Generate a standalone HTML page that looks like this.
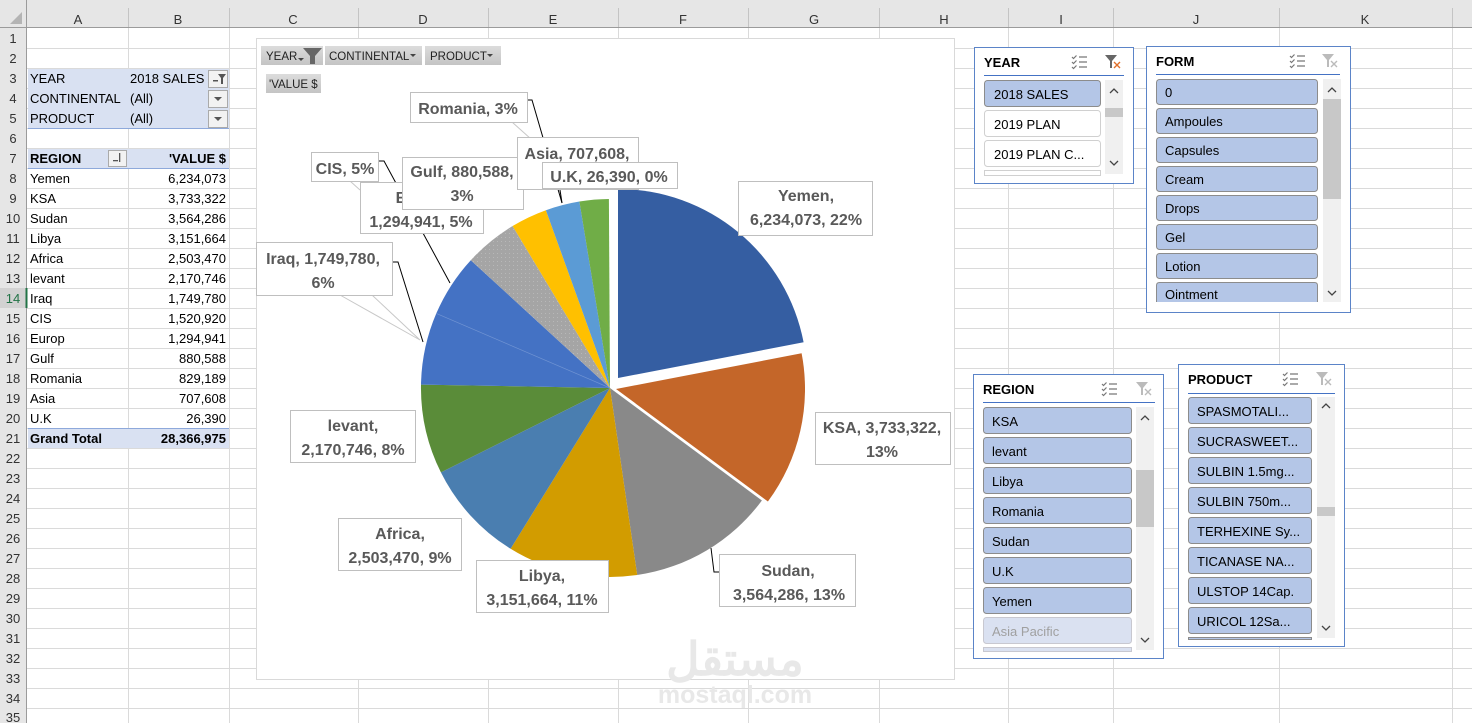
<!DOCTYPE html>
<html><head><meta charset="utf-8"><style>
html,body{margin:0;padding:0;background:#fff;overflow:hidden}
svg{display:block}
text{font-family:"Liberation Sans",sans-serif}
</style></head><body>
<svg width="1472" height="723" viewBox="0 0 1472 723" xmlns="http://www.w3.org/2000/svg">
<!-- grid -->
<g stroke="#dadada" stroke-width="1">
<line x1="27" y1="48.5" x2="1472" y2="48.5"/><line x1="27" y1="68.5" x2="1472" y2="68.5"/><line x1="27" y1="88.5" x2="1472" y2="88.5"/><line x1="27" y1="108.5" x2="1472" y2="108.5"/><line x1="27" y1="128.5" x2="1472" y2="128.5"/><line x1="27" y1="148.5" x2="1472" y2="148.5"/><line x1="27" y1="168.5" x2="1472" y2="168.5"/><line x1="27" y1="188.5" x2="1472" y2="188.5"/><line x1="27" y1="208.5" x2="1472" y2="208.5"/><line x1="27" y1="228.5" x2="1472" y2="228.5"/><line x1="27" y1="248.5" x2="1472" y2="248.5"/><line x1="27" y1="268.5" x2="1472" y2="268.5"/><line x1="27" y1="288.5" x2="1472" y2="288.5"/><line x1="27" y1="308.5" x2="1472" y2="308.5"/><line x1="27" y1="328.5" x2="1472" y2="328.5"/><line x1="27" y1="348.5" x2="1472" y2="348.5"/><line x1="27" y1="368.5" x2="1472" y2="368.5"/><line x1="27" y1="388.5" x2="1472" y2="388.5"/><line x1="27" y1="408.5" x2="1472" y2="408.5"/><line x1="27" y1="428.5" x2="1472" y2="428.5"/><line x1="27" y1="448.5" x2="1472" y2="448.5"/><line x1="27" y1="468.5" x2="1472" y2="468.5"/><line x1="27" y1="488.5" x2="1472" y2="488.5"/><line x1="27" y1="508.5" x2="1472" y2="508.5"/><line x1="27" y1="528.5" x2="1472" y2="528.5"/><line x1="27" y1="548.5" x2="1472" y2="548.5"/><line x1="27" y1="568.5" x2="1472" y2="568.5"/><line x1="27" y1="588.5" x2="1472" y2="588.5"/><line x1="27" y1="608.5" x2="1472" y2="608.5"/><line x1="27" y1="628.5" x2="1472" y2="628.5"/><line x1="27" y1="648.5" x2="1472" y2="648.5"/><line x1="27" y1="668.5" x2="1472" y2="668.5"/><line x1="27" y1="688.5" x2="1472" y2="688.5"/><line x1="27" y1="708.5" x2="1472" y2="708.5"/>
<line x1="128.5" y1="28" x2="128.5" y2="723"/><line x1="229.5" y1="28" x2="229.5" y2="723"/><line x1="358.5" y1="28" x2="358.5" y2="723"/><line x1="488.5" y1="28" x2="488.5" y2="723"/><line x1="618.5" y1="28" x2="618.5" y2="723"/><line x1="748.5" y1="28" x2="748.5" y2="723"/><line x1="879.5" y1="28" x2="879.5" y2="723"/><line x1="1008.5" y1="28" x2="1008.5" y2="723"/><line x1="1113.5" y1="28" x2="1113.5" y2="723"/><line x1="1279.5" y1="28" x2="1279.5" y2="723"/><line x1="1452.5" y1="28" x2="1452.5" y2="723"/>
</g>
<!-- headers -->
<rect x="0" y="0" width="1472" height="28" fill="#e6e6e6"/>
<rect x="0" y="0" width="27" height="723" fill="#e6e6e6"/>
<rect x="0" y="288" width="27" height="20" fill="#d2d2d2"/>
<line x1="26.5" y1="288" x2="26.5" y2="308" stroke="#217346" stroke-width="2"/>
<line x1="0" y1="27.5" x2="1472" y2="27.5" stroke="#9b9b9b"/>
<line x1="26.5" y1="0" x2="26.5" y2="288" stroke="#9b9b9b"/>
<line x1="26.5" y1="308" x2="26.5" y2="723" stroke="#9b9b9b"/>
<polygon points="22,12 22,24 10,24" fill="#b4b4b4"/>
<g stroke="#c4c4c4"><line x1="128.5" y1="8" x2="128.5" y2="27"/><line x1="229.5" y1="8" x2="229.5" y2="27"/><line x1="358.5" y1="8" x2="358.5" y2="27"/><line x1="488.5" y1="8" x2="488.5" y2="27"/><line x1="618.5" y1="8" x2="618.5" y2="27"/><line x1="748.5" y1="8" x2="748.5" y2="27"/><line x1="879.5" y1="8" x2="879.5" y2="27"/><line x1="1008.5" y1="8" x2="1008.5" y2="27"/><line x1="1113.5" y1="8" x2="1113.5" y2="27"/><line x1="1279.5" y1="8" x2="1279.5" y2="27"/><line x1="1452.5" y1="8" x2="1452.5" y2="27"/></g>
<g font-size="13" fill="#333" text-anchor="middle">
<text x="78" y="24">A</text><text x="178" y="24">B</text><text x="293" y="24">C</text><text x="423" y="24">D</text><text x="553" y="24">E</text><text x="683" y="24">F</text><text x="814" y="24">G</text><text x="944" y="24">H</text><text x="1061" y="24">I</text><text x="1196" y="24">J</text><text x="1365" y="24">K</text>
</g>
<g font-size="13" fill="#333" text-anchor="middle">
<text x="13" y="43">1</text><text x="13" y="63">2</text><text x="13" y="83">3</text><text x="13" y="103">4</text><text x="13" y="123">5</text><text x="13" y="143">6</text><text x="13" y="163">7</text><text x="13" y="183">8</text><text x="13" y="203">9</text><text x="13" y="223">10</text><text x="13" y="243">11</text><text x="13" y="263">12</text><text x="13" y="283">13</text><text x="13" y="303" fill="#217346">14</text><text x="13" y="323">15</text><text x="13" y="343">16</text><text x="13" y="363">17</text><text x="13" y="383">18</text><text x="13" y="403">19</text><text x="13" y="423">20</text><text x="13" y="443">21</text><text x="13" y="463">22</text><text x="13" y="483">23</text><text x="13" y="503">24</text><text x="13" y="523">25</text><text x="13" y="543">26</text><text x="13" y="563">27</text><text x="13" y="583">28</text><text x="13" y="603">29</text><text x="13" y="623">30</text><text x="13" y="643">31</text><text x="13" y="663">32</text><text x="13" y="683">33</text><text x="13" y="703">34</text><text x="13" y="722">35</text>
</g>
<!-- pivot -->
<rect x="28" y="69" width="201" height="59" fill="#d9e1f2"/>
<line x1="28" y1="128.5" x2="229" y2="128.5" stroke="#8ea9db"/>
<rect x="28" y="149" width="201" height="19" fill="#d9e1f2"/>
<line x1="28" y1="168.5" x2="229" y2="168.5" stroke="#8ea9db"/>
<rect x="28" y="429" width="201" height="19" fill="#d9e1f2"/>
<line x1="28" y1="428.5" x2="229" y2="428.5" stroke="#8ea9db"/>
<g fill="#f2f2f2" stroke="#aaa"><rect x="208.5" y="70.5" width="19" height="17"/><rect x="208.5" y="90.5" width="19" height="17"/><rect x="208.5" y="110.5" width="19" height="17"/><rect x="108.5" y="150.5" width="18" height="16"/></g>
<g fill="#555"><polygon points="214,97 222,97 218,101"/><polygon points="214,117 222,117 218,121"/><polygon points="218,74 226,74 223,78 223,84 221,84 221,78"/><rect x="213" y="80" width="5" height="1.5"/><rect x="113" y="160" width="5" height="1.3"/><rect x="119" y="153" width="1.3" height="9"/></g>
<g font-size="13" fill="#000">
<text x="30" y="83">YEAR</text><text x="130" y="83">2018 SALES</text>
<text x="30" y="103">CONTINENTAL</text><text x="130" y="103">(All)</text>
<text x="30" y="123">PRODUCT</text><text x="130" y="123">(All)</text>
<text x="30" y="163" font-weight="bold">REGION</text><text x="226" y="163" font-weight="bold" text-anchor="end">'VALUE $</text>
<text x="30" y="183">Yemen</text><text x="30" y="203">KSA</text><text x="30" y="223">Sudan</text><text x="30" y="243">Libya</text><text x="30" y="263">Africa</text><text x="30" y="283">levant</text><text x="30" y="303">Iraq</text><text x="30" y="323">CIS</text><text x="30" y="343">Europ</text><text x="30" y="363">Gulf</text><text x="30" y="383">Romania</text><text x="30" y="403">Asia</text><text x="30" y="423">U.K</text>
<text x="30" y="443" font-weight="bold">Grand Total</text>
</g>
<g font-size="13" fill="#000" text-anchor="end">
<text x="226" y="183">6,234,073</text><text x="226" y="203">3,733,322</text><text x="226" y="223">3,564,286</text><text x="226" y="243">3,151,664</text><text x="226" y="263">2,503,470</text><text x="226" y="283">2,170,746</text><text x="226" y="303">1,749,780</text><text x="226" y="323">1,520,920</text><text x="226" y="343">1,294,941</text><text x="226" y="363">880,588</text><text x="226" y="383">829,189</text><text x="226" y="403">707,608</text><text x="226" y="423">26,390</text><text x="226" y="443" font-weight="bold">28,366,975</text>
</g>
<!-- chart -->
<rect x="256.5" y="38.5" width="698" height="641" fill="#fff" stroke="#d9d9d9"/>
<defs><linearGradient id="bg" x1="0" y1="0" x2="0" y2="1"><stop offset="0" stop-color="#dcdcdc"/><stop offset="1" stop-color="#c4c4c4"/></linearGradient>
<pattern id="dots" width="4" height="4" patternUnits="userSpaceOnUse"><rect width="4" height="4" fill="#a5a5a5"/><rect x="1" y="1" width="1" height="1" fill="#b8b8b8"/></pattern></defs>
<rect x="261" y="46" width="62" height="19" fill="url(#bg)"/><rect x="325" y="46" width="97" height="19" fill="url(#bg)"/><rect x="425" y="46" width="76" height="19" fill="url(#bg)"/><rect x="266" y="74" width="55" height="19" fill="url(#bg)"/>
<g font-size="11.5" fill="#222"><text x="266" y="60">YEAR</text><text x="329" y="60">CONTINENTAL</text><text x="430" y="60">PRODUCT</text><text x="269" y="88">'VALUE $</text></g>
<g fill="#444"><polygon points="298,58 304,58 301,61"/><polygon points="303,48 322,48 315,56 315,64 310,64 310,56" fill="#666"/><polygon points="410,54 416,54 413,57"/><polygon points="487,54 493,54 490,57"/></g>
<!-- pie -->
<g>
<path d="M618,378 L618,189 A189,189 0 0 1 803.6,342.3 Z" fill="#355ea2"/>
<path d="M616,389 L801.6,353.3 A189,189 0 0 1 767.9,501.5 Z" fill="#c46629"/>
<path d="M610,388 L761.9,500.5 A189,189 0 0 1 637.2,575 Z" fill="#898989"/>
<path d="M610,388 L637.2,575 A189,189 0 0 1 510.6,548.8 Z" fill="#d29c00"/>
<path d="M610,388 L510.6,548.8 A189,189 0 0 1 440.9,472.4 Z" fill="#4a7eb0"/>
<path d="M610,388 L440.9,472.4 A189,189 0 0 1 421,384.6 Z" fill="#5a8c39"/>
<path d="M610,388 L421,384.6 A189,189 0 0 1 436.3,313.4 Z" fill="#4472c4"/>
<path d="M610,388 L436.3,313.4 A189,189 0 0 1 470.8,260.2 Z" fill="#4472c4"/>
<path d="M610,388 L470.8,260.2 A189,189 0 0 1 512.6,226 Z" fill="url(#dots)"/>
<path d="M610,388 L512.6,226 A189,189 0 0 1 545.9,210.2 Z" fill="#ffc000"/>
<path d="M610,388 L545.9,210.2 A189,189 0 0 1 579.4,201.5 Z" fill="#5b9bd5"/>
<path d="M610,388 L579.4,201.5 A189,189 0 0 1 608.9,199 Z" fill="#70ad47"/>
<line x1="610" y1="388" x2="436.3" y2="313.4" stroke="#6f93d3" stroke-width="0.7"/>
</g>
<!-- leader lines -->
<g stroke="#000" stroke-width="1" fill="none">
<polyline points="527,100 532,100 562,203"/>
<polyline points="378,161 384,161 450,283"/>
<polyline points="392,262 398,262 423,342"/>
<polyline points="711,548 714,572 719,572"/>
<line x1="560" y1="190" x2="562" y2="203"/>
</g>
<g stroke="#c8c8c8" fill="none"><polyline points="340,295 420,340 372,295"/><polyline points="512,122 560,165"/><polyline points="350,181 360,190"/></g>
<!-- labels -->
<g font-size="16" font-weight="bold" fill="#595959" text-anchor="middle">
<rect x="738.5" y="181.5" width="134" height="54" fill="#fff" stroke="#bfbfbf"/><text x="806" y="201">Yemen,</text><text x="806" y="225">6,234,073, 22%</text>
<rect x="815.5" y="412.5" width="135" height="52" fill="#fff" stroke="#bfbfbf"/><text x="882" y="433">KSA, 3,733,322,</text><text x="882" y="457">13%</text>
<rect x="719.5" y="554.5" width="136" height="52" fill="#fff" stroke="#bfbfbf"/><text x="788" y="576">Sudan,</text><text x="789" y="600">3,564,286, 13%</text>
<rect x="476.5" y="560.5" width="132" height="52" fill="#fff" stroke="#bfbfbf"/><text x="542" y="581">Libya,</text><text x="542" y="605">3,151,664, 11%</text>
<rect x="338.5" y="518.5" width="123" height="52" fill="#fff" stroke="#bfbfbf"/><text x="400" y="539">Africa,</text><text x="400" y="563">2,503,470, 9%</text>
<rect x="290.5" y="410.5" width="125" height="52" fill="#fff" stroke="#bfbfbf"/><text x="353" y="431">levant,</text><text x="353" y="455">2,170,746, 8%</text>
<rect x="256.5" y="242.5" width="136" height="53" fill="#fff" stroke="#bfbfbf"/><text x="323" y="264">Iraq, 1,749,780,</text><text x="323" y="288">6%</text>
<rect x="311.5" y="152.5" width="67" height="29" fill="#fff" stroke="#bfbfbf"/><text x="345" y="174">CIS, 5%</text>
<rect x="360.5" y="182.5" width="123" height="51" fill="#fff" stroke="#bfbfbf"/><text x="421" y="203">Europ,</text><text x="421" y="227">1,294,941, 5%</text>
<rect x="402.5" y="157.5" width="121" height="52" fill="#fff" stroke="#bfbfbf"/><text x="462" y="177">Gulf, 880,588,</text><text x="462" y="201">3%</text>
<rect x="410.5" y="92.5" width="117" height="30" fill="#fff" stroke="#bfbfbf"/><text x="468" y="114">Romania, 3%</text>
<rect x="517.5" y="137.5" width="121" height="52" fill="#fff" stroke="#bfbfbf"/><text x="577" y="159">Asia, 707,608,</text>
<rect x="542.5" y="162.5" width="135" height="26" fill="#fff" stroke="#bfbfbf"/><text x="609" y="182">U.K, 26,390, 0%</text>
</g>
<!-- watermark -->
<g fill="#e8e8e8" text-anchor="middle" font-weight="bold">
<text x="735" y="675" font-size="46" font-family="'DejaVu Sans',sans-serif">مستقل</text>
<text x="735" y="703" font-size="25">mostaql.com</text>
</g>
<!-- slicers -->
<g font-size="13" fill="#000">
<rect x="974.5" y="47.5" width="159" height="136" fill="#fff" stroke="#5b84c8"/>
<text x="984" y="67" font-weight="bold">YEAR</text>
<line x1="984" y1="75.5" x2="1124" y2="75.5" stroke="#4472c4"/>
<rect x="984.5" y="80.5" width="116" height="26" rx="3" fill="#b4c6e7" stroke="#8c8c8c"/><text x="994" y="99">2018 SALES</text>
<rect x="984.5" y="110.5" width="116" height="26" rx="3" fill="#fff" stroke="#d0d0d0"/><text x="994" y="129">2019 PLAN</text>
<rect x="984.5" y="140.5" width="116" height="26" rx="3" fill="#fff" stroke="#d0d0d0"/><text x="994" y="159">2019 PLAN C...</text>
<rect x="984.5" y="170.5" width="116" height="5" fill="#fff" stroke="#d0d0d0"/>
<rect x="1105" y="80" width="18" height="94" fill="#f0f0f0"/><rect x="1105" y="108" width="18" height="9" fill="#c8c8c8"/>
<rect x="1146.5" y="46.5" width="204" height="266" fill="#fff" stroke="#5b84c8"/>
<text x="1156" y="66" font-weight="bold">FORM</text>
<line x1="1156" y1="74.5" x2="1340" y2="74.5" stroke="#4472c4"/>
<g fill="#b4c6e7" stroke="#8c8c8c">
<rect x="1156.5" y="79.5" width="161" height="25" rx="3"/><rect x="1156.5" y="108.5" width="161" height="25" rx="3"/><rect x="1156.5" y="137.5" width="161" height="25" rx="3"/><rect x="1156.5" y="166.5" width="161" height="25" rx="3"/><rect x="1156.5" y="195.5" width="161" height="25" rx="3"/><rect x="1156.5" y="224.5" width="161" height="25" rx="3"/><rect x="1156.5" y="253.5" width="161" height="25" rx="3"/><path d="M1156.5,302 V285.5 Q1156.5,282.5 1159.5,282.5 H1314.5 Q1317.5,282.5 1317.5,285.5 V302"/>
</g>
<text x="1165" y="97">0</text><text x="1165" y="126">Ampoules</text><text x="1165" y="155">Capsules</text><text x="1165" y="184">Cream</text><text x="1165" y="213">Drops</text><text x="1165" y="242">Gel</text><text x="1165" y="271">Lotion</text><text x="1165" y="299">Ointment</text>
<rect x="1156" y="302" width="163" height="10" fill="#fff"/>
<rect x="1323" y="79" width="18" height="223" fill="#f0f0f0"/><rect x="1323" y="99" width="18" height="100" fill="#c8c8c8"/>
<rect x="973.5" y="374.5" width="190" height="284" fill="#fff" stroke="#5b84c8"/>
<text x="983" y="394" font-weight="bold">REGION</text>
<line x1="983" y1="402.5" x2="1155" y2="402.5" stroke="#4472c4"/>
<g fill="#b4c6e7" stroke="#8c8c8c">
<rect x="983.5" y="407.5" width="148" height="26" rx="3"/><rect x="983.5" y="437.5" width="148" height="26" rx="3"/><rect x="983.5" y="467.5" width="148" height="26" rx="3"/><rect x="983.5" y="497.5" width="148" height="26" rx="3"/><rect x="983.5" y="527.5" width="148" height="26" rx="3"/><rect x="983.5" y="557.5" width="148" height="26" rx="3"/><rect x="983.5" y="587.5" width="148" height="26" rx="3"/>
<rect x="983.5" y="617.5" width="148" height="26" rx="3" fill="#dae1f1" stroke="#c8c8d0"/>
<rect x="983.5" y="647.5" width="148" height="4" fill="#dae1f1" stroke="#c8c8d0"/>
</g>
<text x="992" y="426">KSA</text><text x="992" y="456">levant</text><text x="992" y="486">Libya</text><text x="992" y="516">Romania</text><text x="992" y="546">Sudan</text><text x="992" y="576">U.K</text><text x="992" y="606">Yemen</text><text x="992" y="636" fill="#a0a0a0">Asia Pacific</text>
<rect x="1136" y="407" width="18" height="243" fill="#f0f0f0"/><rect x="1136" y="470" width="18" height="57" fill="#c8c8c8"/>
<rect x="1178.5" y="364.5" width="166" height="282" fill="#fff" stroke="#5b84c8"/>
<text x="1188" y="384" font-weight="bold">PRODUCT</text>
<line x1="1188" y1="393.5" x2="1335" y2="393.5" stroke="#4472c4"/>
<g fill="#b4c6e7" stroke="#8c8c8c">
<rect x="1188.5" y="397.5" width="123" height="26" rx="3"/><rect x="1188.5" y="427.5" width="123" height="26" rx="3"/><rect x="1188.5" y="457.5" width="123" height="26" rx="3"/><rect x="1188.5" y="487.5" width="123" height="26" rx="3"/><rect x="1188.5" y="517.5" width="123" height="26" rx="3"/><rect x="1188.5" y="547.5" width="123" height="26" rx="3"/><rect x="1188.5" y="577.5" width="123" height="26" rx="3"/><rect x="1188.5" y="607.5" width="123" height="26" rx="3"/><rect x="1188.5" y="637.5" width="123" height="2"/>
</g>
<text x="1197" y="416">SPASMOTALI...</text><text x="1197" y="446">SUCRASWEET...</text><text x="1197" y="476">SULBIN 1.5mg...</text><text x="1197" y="506">SULBIN 750m...</text><text x="1197" y="536">TERHEXINE Sy...</text><text x="1197" y="566">TICANASE NA...</text><text x="1197" y="596">ULSTOP 14Cap.</text><text x="1197" y="626">URICOL 12Sa...</text>
<rect x="1317" y="397" width="18" height="241" fill="#f0f0f0"/><rect x="1317" y="507" width="18" height="9" fill="#c8c8c8"/>
</g>
<g stroke="#444" stroke-width="1.3" fill="none">
<polyline points="1110,93 1114,89 1118,93"/><polyline points="1110,161 1114,165 1118,161"/>
<polyline points="1328,92 1332,88 1336,92"/><polyline points="1328,291 1332,295 1336,291"/>
<polyline points="1141,420 1145,416 1149,420"/><polyline points="1141,638 1145,642 1149,638"/>
<polyline points="1322,408 1326,404 1330,408"/><polyline points="1322,626 1326,630 1330,626"/>
</g>
<g stroke="#777" stroke-width="1.2" fill="none">
<path d="M1072,57 l1.5,1.5 l3,-3 M1072,62 l1.5,1.5 l3,-3 M1072,67 l1.5,1.5 l3,-3 M1079,57h8 M1079,62h8 M1079,67h8"/>
<path d="M1290,56 l1.5,1.5 l3,-3 M1290,61 l1.5,1.5 l3,-3 M1290,66 l1.5,1.5 l3,-3 M1297,56h8 M1297,61h8 M1297,66h8"/>
<path d="M1102,384 l1.5,1.5 l3,-3 M1102,389 l1.5,1.5 l3,-3 M1102,394 l1.5,1.5 l3,-3 M1109,384h8 M1109,389h8 M1109,394h8"/>
<path d="M1283,374 l1.5,1.5 l3,-3 M1283,379 l1.5,1.5 l3,-3 M1283,384 l1.5,1.5 l3,-3 M1290,374h8 M1290,379h8 M1290,384h8"/>
</g>
<g>
<polygon points="1105,55 1117,55 1112,61 1112,68 1110,68 1110,61" fill="#666"/><path d="M1114,62 l6,6 M1120,62 l-6,6" stroke="#e0702c" stroke-width="1.4"/>
<polygon points="1322,54 1334,54 1329,60 1329,67 1327,67 1327,60" fill="#bbb"/><path d="M1331,61 l6,6 M1337,61 l-6,6" stroke="#bbb" stroke-width="1.4"/>
<polygon points="1136,382 1148,382 1143,388 1143,395 1141,395 1141,388" fill="#bbb"/><path d="M1145,389 l6,6 M1151,389 l-6,6" stroke="#bbb" stroke-width="1.4"/>
<polygon points="1316,372 1328,372 1323,378 1323,385 1321,385 1321,378" fill="#bbb"/><path d="M1325,379 l6,6 M1331,379 l-6,6" stroke="#bbb" stroke-width="1.4"/>
</g>
</svg>
</body></html>
